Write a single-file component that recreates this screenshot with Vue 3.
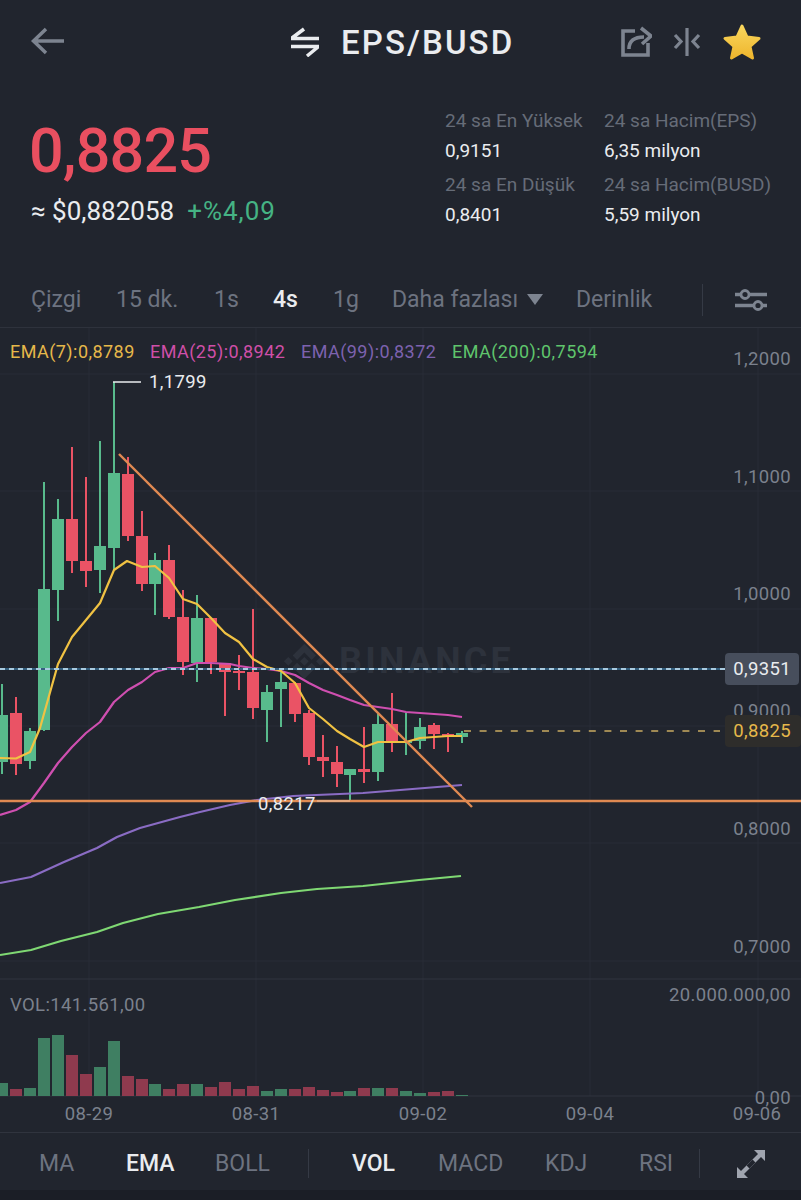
<template>
  <div class="page">
    <header class="top-bar">
      <svg class="back-icon" width="36" height="30" viewBox="0 0 36 30">
        <path d="M34 14H4M16 2L3.500 14 16 26" fill="none" stroke="#7d8490" stroke-width="3.500" />
      </svg>
      <div class="title">
        <svg width="30" height="30" viewBox="0 0 30 30">
          <path d="M1 11.500H29M2 11L14 2M1 19.500H29M28 20L17 29" fill="none" stroke="#eaecef" stroke-width="3.500" />
        </svg>
        <span>EPS/BUSD</span>
      </div>
      <div class="top-icons">
        <svg width="32" height="32" viewBox="0 0 32 32">
          <path d="M15 5H3V29H28V17" fill="none" stroke="#7d8490" stroke-width="3.600" />
          <path d="M9 23C9 15 14 11 24 11" fill="none" stroke="#7d8490" stroke-width="3.600" />
          <path d="M21 2L31 10 22 18" fill="none" stroke="#7d8490" stroke-width="3.600" />
        </svg>
        <svg class="split" width="28" height="28" viewBox="0 0 28 28">
          <path d="M14 0V28" stroke="#7d8490" stroke-width="3.200" />
          <path d="M2 7L8 13.500 2 20M26 7L20 13.500 26 20" fill="none" stroke="#7d8490" stroke-width="3.200" />
        </svg>
        <svg class="star" width="40" height="38" viewBox="0 0 40 38">
          <defs>
            <linearGradient id="starFill" x1="0" y1="0" x2="0" y2="1">
              <stop offset="0" stop-color="#f9d65c" />
              <stop offset="1" stop-color="#eeb62e" />
            </linearGradient>
          </defs>
          <path d="M20 3L25 14 37 15.500 28 23.500 30.500 35 20 29 9.500 35 12 23.500 3 15.500 15 14Z" fill="url(#starFill)" stroke="url(#starFill)" stroke-width="3" stroke-linejoin="round" />
        </svg>
      </div>
    </header>

    <section class="summary">
      <div class="price-block">
        <div class="price">0,8825</div>
        <div class="sub-price">≈ $0,882058<span class="change">+%4,09</span></div>
      </div>
      <div class="stats">
        <div v-for="stat in stats" :key="stat.label" class="stat">
          <div class="stat-label">{{ stat.label }}</div>
          <div class="stat-value">{{ stat.value }}</div>
        </div>
      </div>
    </section>

    <nav class="intervals">
      <span>Çizgi</span>
      <span>15 dk.</span>
      <span>1s</span>
      <span class="active">4s</span>
      <span>1g</span>
      <span class="more">Daha fazlası<i class="caret"></i></span>
      <span>Derinlik</span>
      <i class="divider"></i>
      <svg width="32" height="22" viewBox="0 0 32 22">
        <path d="M0 5.500H32M0 16.500H32" stroke="#7d8490" stroke-width="3.400" />
        <circle cx="10" cy="5.500" r="4" fill="#21252e" stroke="#7d8490" stroke-width="2.800" />
        <circle cx="23" cy="16.500" r="4" fill="#21252e" stroke="#7d8490" stroke-width="2.800" />
      </svg>
    </nav>

    <svg class="chart" width="801" height="804" viewBox="0 328 801 804">
      <!-- grid -->
      <path v-for="y in gridRows" :key="'r' + y" :d="`M0 ${y}H801`" stroke="#292d37" stroke-width="1" />
      <path v-for="x in gridCols" :key="'c' + x" :d="`M${x} 328V1096`" stroke="#292d37" stroke-width="1" />
      <path d="M0 979H801" stroke="#30343e" stroke-width="1" />
      <path d="M0 1096H801" stroke="#30343e" stroke-width="1" />

      <!-- watermark -->
      <g transform="translate(281 638) scale(1.46)" fill="#2d323c">
        <path d="M16 4L24 12 21 15 16 10 11 15 8 12ZM16 28L24 20 21 17 16 22 11 17 8 20ZM5 13L8 16 5 19 2 16ZM27 13L30 16 27 19 24 16ZM16 13L19 16 16 19 13 16Z" />
      </g>
      <text x="339" y="673" class="watermark">BINANCE</text>

      <!-- candles -->
      <g v-for="c in candles" :key="c[0]" :fill="c[5] ? green : red">
        <rect :x="c[0] - 1" :y="c[1]" width="2" :height="c[4] - c[1]" />
        <rect :x="c[0] - 6" :y="c[2]" width="12" :height="c[3] - c[2]" />
      </g>

      <!-- moving averages -->
      <polyline :points="ema200" class="ma" stroke="#7fd873" />
      <polyline :points="ema99" class="ma" stroke="#8a6cc4" />
      <polyline :points="ema25" class="ma" stroke="#cf4fb0" />
      <polyline :points="ema7" class="ma" stroke="#f0c243" />

      <!-- price lines -->
      <path d="M0 669H725" stroke="#35607f" stroke-width="2" />
      <path d="M0 669H725" stroke="#a9cbe0" stroke-width="2" stroke-dasharray="5 4" />
      <path d="M464 731H720" stroke="#c9ab62" stroke-width="1.500" stroke-dasharray="7 8.600" />
      <path d="M0 801H801" stroke="#e08a52" stroke-width="2.400" />
      <path d="M119 454L472 807" stroke="#e08a52" stroke-width="2.400" />

      <!-- extremes -->
      <path d="M113 382H141" stroke="#eaecef" stroke-width="1.500" />
      <text x="149" y="388" class="num light">1,1799</text>
      <path d="M317 801H350" stroke="#e8c4a8" stroke-width="1" />
      <text x="258" y="810" class="num light">0,8217</text>

      <!-- legend -->
      <text x="10" y="358" class="legend" fill="#e6b84a">EMA(7):0,8789</text>
      <text x="150" y="358" class="legend" fill="#cf4fa8">EMA(25):0,8942</text>
      <text x="301" y="358" class="legend" fill="#7d62ae">EMA(99):0,8372</text>
      <text x="452" y="358" class="legend" fill="#5fc46c">EMA(200):0,7594</text>

      <!-- price axis -->
      <text v-for="t in priceAxis" :key="t.text" x="791" :y="t.y" class="num axis end">{{ t.text }}</text>
      <rect x="725" y="653" width="74" height="32" rx="4" fill="#474e5c" />
      <text x="791" y="675" class="num end light">0,9351</text>
      <rect x="725" y="715" width="76" height="32" rx="4" fill="#2e2d2b" />
      <text x="791" y="737" class="num end" fill="#e6b84a">0,8825</text>

      <!-- volume -->
      <text x="10" y="1011" class="num axis">VOL:141.561,00</text>
      <text x="791" y="1001" class="num axis end">20.000.000,00</text>
      <rect v-for="v in volumes" :key="'v' + v.x" :x="v.x - 6" :y="v.top" width="12" :height="1096 - v.top" :fill="v.up ? volGreen : volRed" />
      <text x="791" y="1104" class="num axis end">0,00</text>
      <text v-for="d in dates" :key="d.text" :x="d.x" y="1120" class="num axis mid">{{ d.text }}</text>
    </svg>

    <nav class="indicators">
      <span>MA</span>
      <span class="active">EMA</span>
      <span>BOLL</span>
      <i class="divider"></i>
      <span class="active">VOL</span>
      <span>MACD</span>
      <span>KDJ</span>
      <span>RSI</span>
      <i class="divider"></i>
      <svg width="28" height="28" viewBox="0 0 28 28">
        <path d="M17 0H28V11L24 7 7 24 11 28H0V17L4 21 21 4Z" fill="#a0a5af" />
        <path d="M11 17L17 11" stroke="#21252e" stroke-width="4" />
      </svg>
    </nav>
    <div class="home-strip"></div>
  </div>
</template>

<script setup>
const green = '#58ba8c'
const red = '#ea5365'
const volGreen = '#3f7f62'
const volRed = '#8f3a4e'

const stats = [
  { label: '24 sa En Yüksek', value: '0,9151' },
  { label: '24 sa Hacim(EPS)', value: '6,35 milyon' },
  { label: '24 sa En Düşük', value: '0,8401' },
  { label: '24 sa Hacim(BUSD)', value: '5,59 milyon' }
]

const gridRows = [374, 491, 609, 726, 843, 961]
const gridCols = [89, 256, 423, 590, 758]

const priceAxis = [
  { text: '1,2000', y: 365 },
  { text: '1,1000', y: 483 },
  { text: '1,0000', y: 600 },
  { text: '0,9000', y: 717 },
  { text: '0,8000', y: 835 },
  { text: '0,7000', y: 953 }
]

const dates = [
  { text: '08-29', x: 89 },
  { text: '08-31', x: 256 },
  { text: '09-02', x: 423 },
  { text: '09-04', x: 590 },
  { text: '09-06', x: 757 }
]

// x, wick top, body top, body bottom, wick bottom, rising
const candles = [
  [2, 684, 715, 762, 774, true],
  [16, 697, 713, 764, 775, false],
  [30, 728, 731, 761, 769, true],
  [44, 482, 589, 730, 731, true],
  [58, 499, 519, 590, 621, true],
  [72, 447, 519, 561, 573, false],
  [86, 477, 561, 571, 587, false],
  [100, 441, 546, 570, 593, true],
  [114, 382, 473, 548, 570, true],
  [128, 457, 474, 536, 541, false],
  [142, 511, 536, 584, 591, false],
  [155, 553, 560, 584, 615, true],
  [169, 545, 560, 617, 619, false],
  [183, 590, 617, 662, 675, false],
  [197, 595, 618, 663, 682, true],
  [211, 618, 618, 662, 674, false],
  [225, 663, 663, 672, 716, false],
  [239, 655, 671, 673, 690, false],
  [253, 609, 672, 708, 719, false],
  [267, 685, 692, 710, 742, true],
  [281, 672, 682, 689, 727, true],
  [295, 682, 683, 714, 722, false],
  [309, 710, 713, 757, 765, false],
  [323, 735, 757, 761, 777, false],
  [337, 746, 762, 774, 787, false],
  [350, 769, 769, 775, 802, true],
  [364, 727, 769, 772, 783, false],
  [378, 714, 724, 772, 781, true],
  [392, 693, 724, 741, 752, false],
  [406, 713, 741, 743, 755, true],
  [420, 718, 727, 741, 749, true],
  [434, 723, 725, 734, 749, false],
  [448, 733, 734, 737, 752, false],
  [462, 731, 733, 737, 743, true]
]

const volumeTops = [
  1083, 1089, 1088, 1038, 1035, 1055, 1074, 1067, 1041, 1076, 1079, 1084,
  1089, 1084, 1084, 1087, 1082, 1089, 1086, 1091, 1089, 1089, 1087, 1090,
  1092, 1091, 1088, 1088, 1088, 1091, 1093, 1092, 1091, 1095
]

const volumes = candles.map((c, i) => ({ x: c[0], top: volumeTops[i], up: c[5] }))

const ema7 = '0,758 16,758.500 30,752 40,728 58,664 72,637 86,620 100,603 114,570 127,561 142,567 155,566 169,578 183,599 197,604 211,618 225,633 239,642 253,659 267,667 281,671 295,683 309,708 323,719 337,731 350,739 364,747 378,742 392,742 406,742 420,738 434,737 448,736 462,736'
const ema25 = '0,815 16,810 30,802 44,783 58,763 72,747 86,733 100,722 114,702 128,690 142,682 155,672 169,668 183,668 197,663 211,663 230,664 239,666 253,668 267,669 281,671 295,675 309,683 323,690 337,695 350,700 364,705 378,707 392,709 406,712 420,713 434,714 448,715 462,717'
const ema99 = '0,883 31,877 64,862 97,848 117,837 140,828 169,820 180,817 200,812 230,805 257,800 293,796 363,793 462,785'
const ema200 = '0,955 31,950 61,941 97,932 123,923 158,914 199,907 235,900 281,893 317,889 363,886 419,880 461,876'
</script>

<style>
body {
  background: #21252e;
}
</style>

<style scoped>
.page {
  width: 801px;
  height: 1200px;
  background: #21252e;
  color: #eaecef;
  font-family: Roboto, "Liberation Sans", sans-serif;
  display: flex;
  flex-direction: column;
  overflow: hidden;
}

.top-bar {
  height: 84px;
  display: flex;
  align-items: center;
  padding-left: 30px;
  flex-shrink: 0;
}

.back-icon {
  flex-shrink: 0;
}

.title {
  display: flex;
  align-items: center;
  gap: 21px;
  margin-left: 224px;
  font-size: 33px;
  font-weight: 500;
  letter-spacing: 2.1px;
}

.top-icons {
  display: flex;
  align-items: center;
  margin-left: auto;
  padding-right: 39px;
}

.split {
  margin-left: 21px;
}

.star {
  margin-left: 21px;
}

.summary {
  height: 186px;
  display: flex;
  padding-left: 31px;
  flex-shrink: 0;
}

.price-block {
  width: 414px;
}

.price {
  font-size: 61px;
  font-weight: 500;
  line-height: 70px;
  letter-spacing: -0.8px;
  margin-top: 32px;
  margin-left: -2px;
  color: #e94f60;
}

.sub-price {
  font-size: 26px;
  font-weight: 400;
  line-height: 32px;
  margin-top: 9px;
}

.change {
  margin-left: 13px;
  letter-spacing: 1px;
  color: #45b384;
}

.stats {
  display: grid;
  grid-template-columns: 159px 1fr;
  grid-auto-rows: 63.5px;
  padding-top: 24px;
}

.stat-label {
  font-size: 19px;
  line-height: 26px;
  color: #666c78;
}

.stat-value {
  font-size: 19px;
  line-height: 26px;
  margin-top: 4px;
}

.intervals {
  height: 58px;
  display: grid;
  grid-template-columns: 85px 98px 59px 60px 59px 184px 126px 33px 1fr;
  align-items: center;
  padding-left: 31px;
  padding-top: 2px;
  font-size: 23px;
  color: #6d7380;
  border-bottom: 1px solid #2e323c;
  flex-shrink: 0;
  box-sizing: border-box;
}

.intervals .active,
.indicators .active {
  color: #eaecef;
  font-weight: 500;
}

.more {
  display: flex;
  align-items: center;
}

.caret {
  width: 0;
  height: 0;
  margin-left: 9px;
  border-left: 8px solid transparent;
  border-right: 8px solid transparent;
  border-top: 11px solid #7d8490;
}

.divider {
  display: block;
  width: 1px;
  height: 32px;
  background: #353a45;
}

.chart {
  display: block;
  flex-shrink: 0;
  font-family: Roboto, "Liberation Sans", sans-serif;
}

.chart .ma {
  fill: none;
  stroke-width: 2.200;
  stroke-linejoin: round;
}

.chart .legend {
  font-size: 18px;
  letter-spacing: 0.45px;
}

.chart .num {
  font-size: 18.500px;
  letter-spacing: 0.35px;
}

.chart .light {
  fill: #eaecef;
}

.chart .axis {
  fill: #7b818d;
}

.chart .end {
  text-anchor: end;
}

.chart .mid {
  text-anchor: middle;
}

.chart .watermark {
  font-size: 36px;
  font-weight: 700;
  letter-spacing: 3.200px;
  fill: #2d323c;
}

.indicators {
  height: 58px;
  display: grid;
  grid-template-columns: 87px 89px 93px 44px 86px 107px 94px 60px 38px 1fr;
  align-items: center;
  padding-left: 39px;
  padding-top: 4px;
  font-size: 23px;
  color: #6d7380;
  border-top: 1px solid #30343e;
  box-sizing: border-box;
  flex-shrink: 0;
}

.indicators .divider {
  height: 29px;
}

.home-strip {
  flex: 1;
  background: #1b1e26;
}
</style>
